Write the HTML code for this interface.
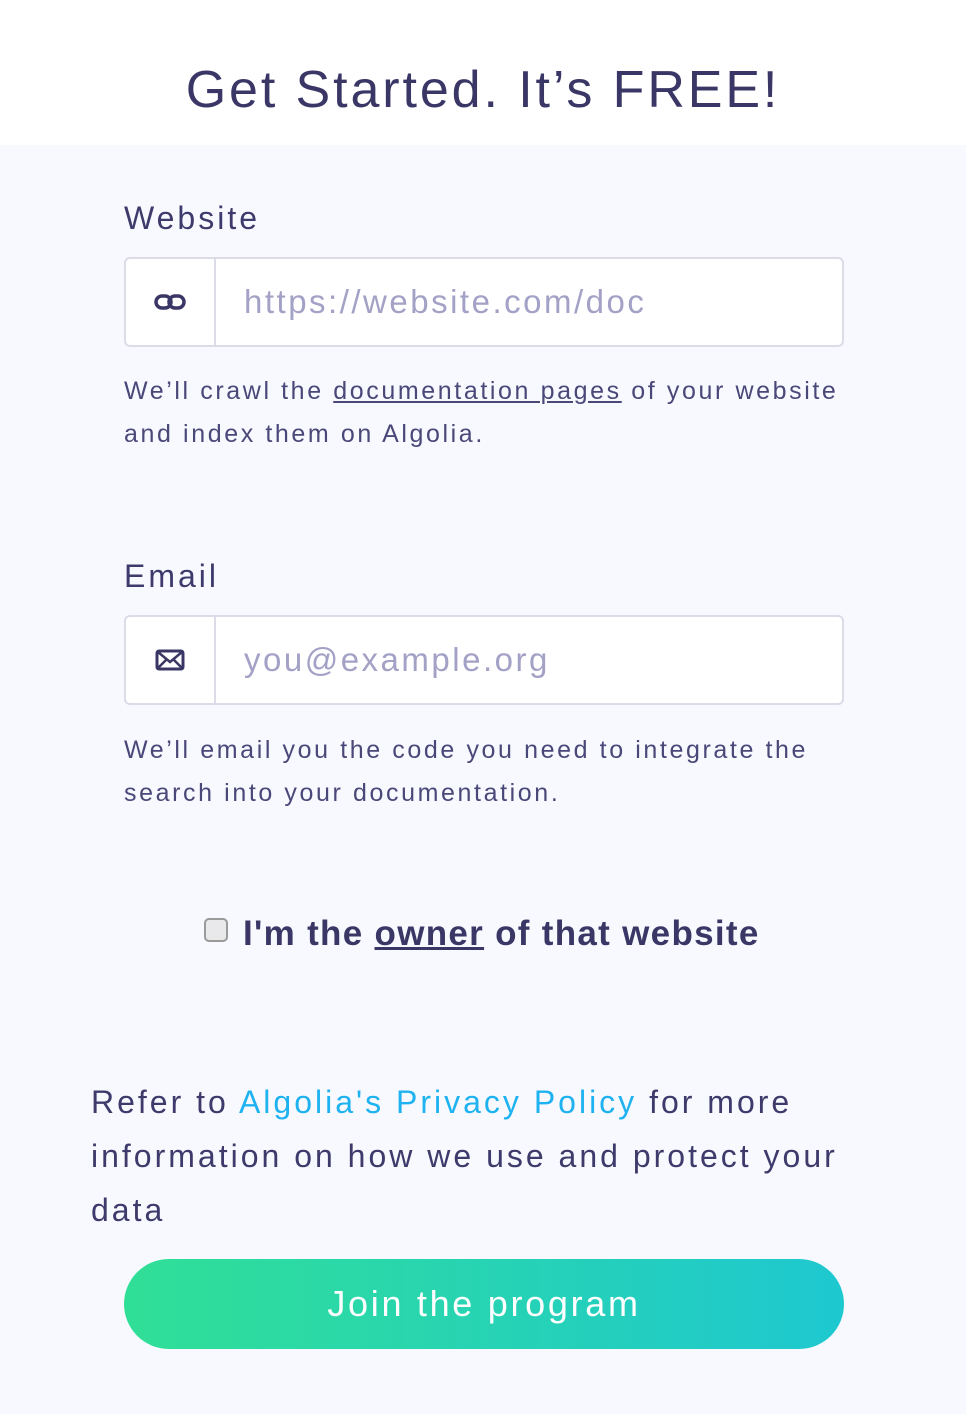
<!DOCTYPE html>
<html><head><meta charset="utf-8"><style>
*{margin:0;padding:0;box-sizing:border-box}
body{width:966px;height:1414px;background:#f8f9fe;font-family:"Liberation Sans",sans-serif;color:#3e3a6b;position:relative;overflow:hidden}
.top{position:absolute;left:0;top:0;width:966px;height:145px;background:#fff}
.a{position:absolute;white-space:nowrap}
h1{position:absolute;left:0;width:966px;top:60px;text-align:center;font-weight:normal;font-size:52px;letter-spacing:2.9px;color:#3a3766}
.lbl{font-size:32px;color:#3e3a6b;letter-spacing:3px}
.box{position:absolute;left:124px;width:720px;height:90px;border:2px solid #dcdbe8;border-radius:6px;background:#fff}
.box .ic{position:absolute;left:0;top:0;width:90px;height:86px;border-right:2px solid #dcdbe8;display:flex;align-items:center;justify-content:center}
.box .ph{position:absolute;left:118px;top:24px;font-size:33px;color:#a3a1c6;letter-spacing:2.5px}
.help{font-size:25px;color:#4a4779;line-height:43px;letter-spacing:2.6px}
.u{text-decoration:underline}
.ref{font-size:32px;line-height:54px;color:#3e3a6b;letter-spacing:3px}
.btn{position:absolute;left:124px;top:1259px;width:720px;height:90px;border-radius:45px;background:linear-gradient(90deg,#30df96,#1ec8d0);color:#fff;font-size:36px;text-align:center;line-height:90px;letter-spacing:2.7px}
.cb{position:absolute;left:204px;top:918px;width:24px;height:24px;border:2px solid #9a9a9a;border-radius:5px;background:#e9e9ec}
</style></head><body>
<div class="top"></div>
<h1>Get Started. It’s FREE!</h1>
<div class="a lbl" style="left:124px;top:200px">Website</div>
<div class="box" style="top:257px"><div class="ic"><svg width="32" height="18" viewBox="0 0 32 18"><rect x="2" y="3" width="15" height="12" rx="6" fill="none" stroke="#3a3766" stroke-width="3.5"/><rect x="15" y="3" width="15" height="12" rx="6" fill="none" stroke="#3a3766" stroke-width="3.5"/></svg></div><div class="a ph">https://website.com/doc</div></div>
<div class="a help" style="left:124px;top:370px">We’ll crawl the <span class="u">documentation pages</span> of your website<br>and index them on Algolia.</div>
<div class="a lbl" style="left:124px;top:558px">Email</div>
<div class="box" style="top:615px"><div class="ic"><svg width="30" height="22" viewBox="0 0 30 22"><rect x="2" y="2" width="26" height="18" rx="2" fill="none" stroke="#3a3766" stroke-width="3"/><path d="M3 3 L15 13 L27 3 M3 19 L11 11 M27 19 L19 11" fill="none" stroke="#3a3766" stroke-width="2.5"/></svg></div><div class="a ph">you@example.org</div></div>
<div class="a help" style="left:124px;top:729px">We’ll email you the code you need to integrate the<br>search into your documentation.</div>
<div class="cb"></div>
<div class="a" style="left:243px;top:914px;font-size:35px;font-weight:bold;color:#3a3766;letter-spacing:1.3px">I'm the <span class="u">owner</span> of that website</div>
<div class="a ref" style="left:91px;top:1075px">Refer to <span style="color:#1fb2f0">Algolia's Privacy Policy</span> for more<br>information on how we use and protect your<br>data</div>
<div class="btn">Join the program</div>
</body></html>
